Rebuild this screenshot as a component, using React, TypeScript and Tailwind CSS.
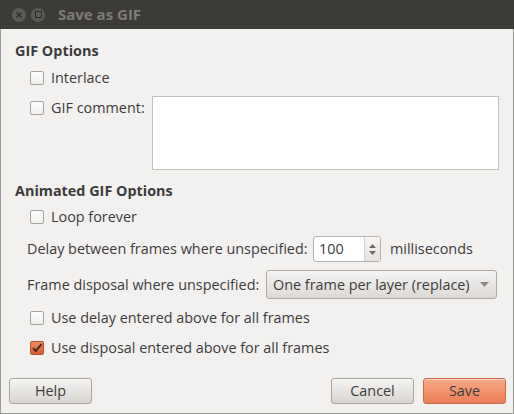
import React from "react";

const font = { fontFamily: '"Open Sans", "DejaVu Sans", sans-serif' };

type CheckProps = { label: string; checked?: boolean };

const Check = ({ label, checked = false }: CheckProps) => (
  <div className="flex h-5 items-center pl-[29px]">
    {checked ? (
      <span className="flex h-[14px] w-[14px] items-center justify-center rounded-[2px] border border-[#b5512c] bg-gradient-to-b from-[#f08a5f] to-[#dd5a2c]">
        <svg width="12" height="12" viewBox="0 0 12 12">
          <path d="M2 6.2 L4.8 9 L10.5 2.2" fill="none" stroke="#4a2a1e" strokeWidth="2" />
        </svg>
      </span>
    ) : (
      <span className="h-[14px] w-[14px] rounded-[2px] border border-[#a6a39e] bg-gradient-to-b from-[#fdfdfd] to-[#f0efee]" />
    )}
    <span className="ml-[7px] text-[14.4px] text-[#3c3c3c]">{label}</span>
  </div>
);

const Button = ({ label, primary = false }: { label: string; primary?: boolean }) => (
  <button
    className={`h-[26px] w-[83px] rounded-[3px] border text-[14.4px] text-[#3c3c3c] shadow-[inset_0_1px_0_rgba(255,255,255,0.6)] ${
      primary
        ? "border-[#c66a47] bg-gradient-to-b from-[#f7a887] to-[#eb7d55]"
        : "border-[#a9a5a0] bg-gradient-to-b from-[#f6f5f4] to-[#d8d5d1]"
    }`}
  >
    {label}
  </button>
);

export default function App() {
  return (
    <div style={font} className="flex h-[414px] w-[514px] flex-col bg-[#f2f1f0] text-[#3c3c3c]">
      <div className="flex h-[29px] items-center bg-[#3c3b37] pl-[12px]">
        <span className="flex h-[14px] w-[14px] items-center justify-center rounded-full bg-[#5b5a56]">
          <svg width="8" height="8" viewBox="0 0 8 8">
            <path d="M1.5 1.5 L6.5 6.5 M6.5 1.5 L1.5 6.5" stroke="#2c2b28" strokeWidth="1.4" />
          </svg>
        </span>
        <span className="ml-[5px] flex h-[14px] w-[14px] items-center justify-center rounded-full bg-[#5b5a56]">
          <span className="h-[7px] w-[7px] border border-[#2c2b28]" />
        </span>
        <span className="ml-[13px] text-[15px] font-bold text-[#7e7c77]">Save as GIF</span>
      </div>

      <div className="flex flex-1 flex-col border-x border-b border-[#9c9a96] pt-[12px]">
        <div className="flex h-5 items-center pl-[14px] text-[14.4px] font-bold">GIF Options</div>
        <div className="mt-[7px]">
          <Check label="Interlace" />
        </div>
        <div className="mt-[8px] flex">
          <div className="flex h-[24px] w-[151px] items-center">
            <Check label="GIF comment:" />
          </div>
          <div className="h-[74px] w-[347px] border border-[#c2bfbb] bg-white" />
        </div>

        <div className="mt-[11px] flex h-5 items-center pl-[14px] text-[14.4px] font-bold">Animated GIF Options</div>
        <div className="mt-[6px]">
          <Check label="Loop forever" />
        </div>

        <div className="mt-[9px] flex h-[26px] items-center pl-[26px] text-[14.4px]">
          <span className="w-[286px]">Delay between frames where unspecified:</span>
          <div className="flex h-[26px] w-[68px] overflow-hidden rounded-[3px] border border-[#b7b4af] bg-white">
            <span className="flex flex-1 items-center pl-[5px]">100</span>
            <span className="flex w-[16px] flex-col items-center justify-center gap-[3px] border-l border-[#d4d1cd] bg-gradient-to-b from-[#f7f6f5] to-[#e4e2df]">
              <svg width="7" height="4" viewBox="0 0 7 4">
                <path d="M0 4 L3.5 0 L7 4 Z" fill="#6e6b66" />
              </svg>
              <svg width="7" height="4" viewBox="0 0 7 4">
                <path d="M0 0 L3.5 4 L7 0 Z" fill="#6e6b66" />
              </svg>
            </span>
          </div>
          <span className="ml-[9px]">milliseconds</span>
        </div>

        <div className="mt-[8px] flex h-[29px] items-center pl-[26px] text-[14.4px]">
          <span className="w-[239px]">Frame disposal where unspecified:</span>
          <div className="flex h-[29px] w-[231px] items-center justify-between rounded-[3px] border border-[#aeaaa5] bg-gradient-to-b from-[#f5f4f3] to-[#dcd9d5] pl-[6px] pr-[7px]">
            <span>One frame per layer (replace)</span>
            <svg width="9" height="5" viewBox="0 0 9 5">
              <path d="M0 0 L9 0 L4.5 5 Z" fill="#8d8a85" />
            </svg>
          </div>
        </div>

        <div className="mt-[9px]">
          <Check label="Use delay entered above for all frames" />
        </div>
        <div className="mt-[10px]">
          <Check label="Use disposal entered above for all frames" checked />
        </div>

        <div className="mt-[20px] flex items-center pl-[8px] pr-[7px]">
          <Button label="Help" />
          <div className="flex-1" />
          <Button label="Cancel" />
          <div className="w-[9px]" />
          <Button label="Save" primary />
        </div>
      </div>
    </div>
  );
}
